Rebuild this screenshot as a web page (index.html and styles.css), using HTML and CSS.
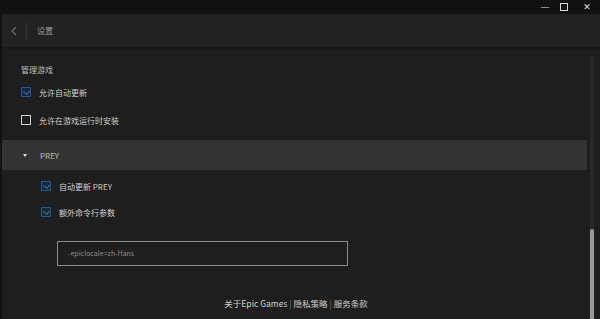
FILE: index.html
```html
<!DOCTYPE html>
<html lang="zh">
<head>
    <meta charset="UTF-8">
    <title>设置</title>
    <link rel="stylesheet" href="styles.css">
</head>
<body>
    <div class="titlebar">
        <span class="win-btn">&#8212;</span>
        <span class="win-btn max"></span>
        <span class="win-btn close">&#10005;</span>
    </div>
    <div class="window">
        <div class="header">
            <span class="back">
                <svg width="8" height="10" viewBox="0 0 8 10"><path d="M6 1 L2 5 L6 9" fill="none" stroke="#6b6b6b" stroke-width="1.2"/></svg>
            </span>
            <span class="sep"></span>
            <span class="title">设置</span>
        </div>
        <div class="body">
            <div class="content">
                <div class="section-title">管理游戏</div>
                <label class="option first">
                    <span class="box checked"></span>
                    <span>允许自动更新</span>
                </label>
                <label class="option">
                    <span class="box"></span>
                    <span>允许在游戏运行时安装</span>
                </label>

                <div class="game-row">
                    <span class="caret"></span>
                    <span>PREY</span>
                </div>

                <div class="game-options">
                    <label class="option">
                        <span class="box checked"></span>
                        <span>自动更新 PREY</span>
                    </label>
                    <label class="option">
                        <span class="box checked"></span>
                        <span>额外命令行参数</span>
                    </label>
                    <div class="args">-epiclocale=zh-Hans</div>
                </div>

                <div class="footer">关于Epic Games <span class="bar">|</span> 隐私策略 <span class="bar">|</span> 服务条款</div>
            </div>
            <div class="scrollbar"><div class="thumb"></div></div>
        </div>
    </div>
</body>
</html>
```

FILE: styles.css
```css
body {
  margin: 0;
  padding: 0;
  width: 600px;
  height: 319px;
  overflow: hidden;
  background-color: #121212;
  font-family: "Noto Sans CJK SC", "Liberation Sans", sans-serif;
  color: #c8c8c8;
}

.titlebar {
  height: 14px;
  display: flex;
  justify-content: flex-end;
  align-items: center;
  padding-right: 8px;
  gap: 8px;
}

.win-btn {
  color: #e0e0e0;
  font-size: 9px;
  line-height: 10px;
  width: 10px;
  text-align: center;
  font-family: "DejaVu Sans", sans-serif;
}

.win-btn.max {
  width: 6px;
  height: 6px;
  border: 1px solid #d8d8d8;
  margin: 0 2px;
}

.win-btn.close {
  font-weight: bold;
  margin-left: 4px;
}

.window {
  margin-left: 2px;
  background-color: #1e1e1e;
  height: 305px;
  display: flex;
  flex-direction: column;
}

.header {
  height: 33px;
  background-color: #222222;
  border-bottom: 2px solid #191919;
  display: flex;
  align-items: center;
  padding-left: 8px;
}

.back {
  display: flex;
  align-items: center;
  width: 10px;
}

.sep {
  width: 1px;
  height: 18px;
  background-color: #333;
  margin: 0 10px 0 6px;
}

.title {
  font-size: 8px;
  color: #9a9a9a;
}

.body {
  flex: 1;
  display: flex;
  position: relative;
}

.content {
  flex: 1;
  padding-top: 15px;
}

.section-title {
  font-size: 8px;
  color: #bdbdbd;
  padding-left: 19px;
  height: 12px;
  line-height: 12px;
}

.option {
  display: flex;
  align-items: center;
  height: 12px;
  margin-top: 16px;
  padding-left: 19px;
  font-size: 8px;
  color: #cfcfcf;
  gap: 8px;
}

.option.first {
  margin-top: 10px;
}

.box {
  width: 8px;
  height: 8px;
  border: 1.5px solid #d0d0d0;
  box-sizing: content-box;
}

.box.checked {
  border-color: #1e5a96;
  background-color: #13325280;
  position: relative;
}

.box.checked::after {
  content: "";
  position: absolute;
  left: 2px;
  top: 1px;
  width: 4px;
  height: 4px;
  border-right: 1px solid #3a74b0;
  border-bottom: 1px solid #3a74b0;
  transform: rotate(40deg);
}

.game-row {
  margin-top: 14px;
  height: 30px;
  background-color: #333333;
  display: flex;
  align-items: center;
  padding-left: 21px;
  font-size: 8px;
  color: #bcbcbc;
  margin-right: 3px;
}

.caret {
  width: 0;
  height: 0;
  border-left: 2.5px solid transparent;
  border-right: 2.5px solid transparent;
  border-top: 3px solid #e0e0e0;
  margin-right: 13px;
}

.game-options {
  padding-left: 20px;
}

.game-options .option {
  margin-top: 14px;
}

.game-options .option:first-child {
  margin-top: 10px;
}

.args {
  margin: 23px 0 0 35px;
  width: 279px;
  height: 23px;
  border: 1px solid #8a8a8a;
  font-size: 7px;
  color: #8c8c8c;
  line-height: 23px;
  padding-left: 10px;
}

.footer {
  margin-top: 31px;
  text-align: center;
  font-size: 8.5px;
  color: #cfcfcf;
}

.bar {
  color: #777;
}

.scrollbar {
  width: 4px;
  margin: 8px 6px 0 0;
  background-color: #2a2a2a;
  display: flex;
  flex-direction: column;
  justify-content: flex-end;
}

.thumb {
  height: 90px;
  background-color: #9a9a9a;
  border-radius: 2px 2px 0 0;
}
```
